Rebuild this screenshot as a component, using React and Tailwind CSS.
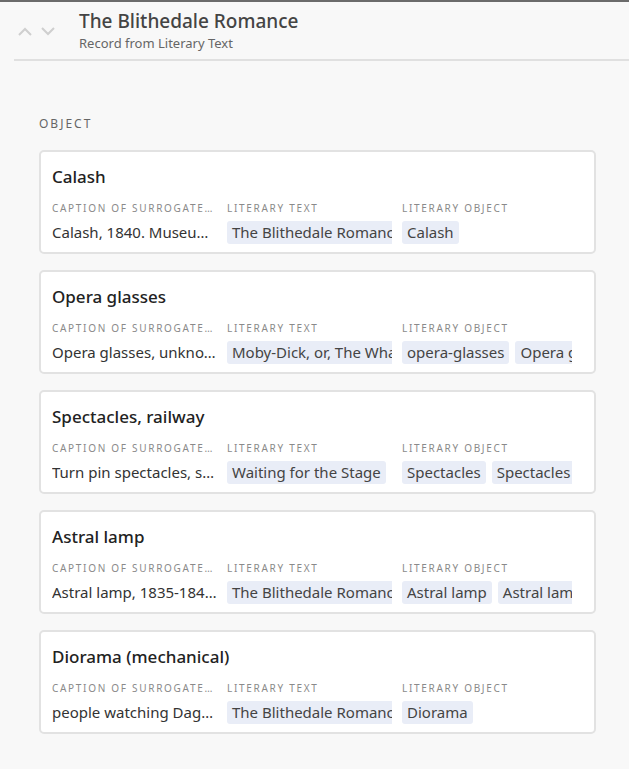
import React from 'react';

const records = [
  {
    title: 'Calash',
    caption: 'Calash, 1840. Museum of Fine Arts, Boston',
    texts: ['The Blithedale Romance'],
    objects: ['Calash'],
  },
  {
    title: 'Opera glasses',
    caption: 'Opera glasses, unknown maker, c. 1850',
    texts: ['Moby-Dick, or, The Whale'],
    objects: ['opera-glasses', 'Opera glasses'],
  },
  {
    title: 'Spectacles, railway',
    caption: 'Turn pin spectacles, steel frame',
    texts: ['Waiting for the Stage'],
    objects: ['Spectacles', 'Spectacles'],
  },
  {
    title: 'Astral lamp',
    caption: 'Astral lamp, 1835-1840, brass',
    texts: ['The Blithedale Romance'],
    objects: ['Astral lamp', 'Astral lamp'],
  },
  {
    title: 'Diorama (mechanical)',
    caption: 'people watching Daguerre diorama',
    texts: ['The Blithedale Romance'],
    objects: ['Diorama'],
  },
];

const Chip = ({ children }) => (
  <span className="shrink-0 bg-[#e9edf7] rounded-[3px] px-[5px] h-[23px] leading-[23px] whitespace-nowrap">
    {children}
  </span>
);

const Label = ({ children }) => (
  <div className="text-[10px] tracking-[1.7px] uppercase text-[#8a8a8a] truncate leading-[14px]">
    {children}
  </div>
);

const Card = ({ rec }) => (
  <div className="bg-white border-2 border-[#e2e2e2] rounded-[5px] px-[11px] pt-[12px] pb-[8px]">
    <div className="text-[17px] text-[#222] font-medium leading-[26px]">{rec.title}</div>
    <div className="grid grid-cols-[165px_165px_170px] gap-x-[10px] mt-[11px]">
      <div className="min-w-0">
        <Label>Caption of surrogate-image</Label>
        <div className="truncate text-[15px] text-[#333] leading-[23px] mt-[6px]">{rec.caption}</div>
      </div>
      <div className="min-w-0">
        <Label>Literary Text</Label>
        <div className="flex gap-[6px] overflow-hidden text-[15px] text-[#444] mt-[6px]">
          {rec.texts.map((t, i) => <Chip key={i}>{t}</Chip>)}
        </div>
      </div>
      <div className="min-w-0">
        <Label>Literary Object</Label>
        <div className="flex gap-[6px] overflow-hidden text-[15px] text-[#444] mt-[6px]">
          {rec.objects.map((t, i) => <Chip key={i}>{t}</Chip>)}
        </div>
      </div>
    </div>
  </div>
);

export default function App() {
  return (
    <div className="min-h-[769px] bg-[#f8f8f8] border-t-2 border-[#6b6b6b] font-['Noto_Sans',sans-serif]">
      <div className="ml-[14px] border-b-2 border-[#e0e0e0] flex items-start h-[59px]">
        <div className="flex items-center gap-[9px] pl-[4px] pt-[25px] text-[#cfcfcf]">
          <svg width="14" height="9" viewBox="0 0 14 9" fill="none" stroke="currentColor" strokeWidth="2">
            <path d="M1 8l6-6 6 6" />
          </svg>
          <svg width="14" height="9" viewBox="0 0 14 9" fill="none" stroke="currentColor" strokeWidth="2">
            <path d="M1 1l6 6 6-6" />
          </svg>
        </div>
        <div className="ml-[24px] pt-[6px]">
          <div className="text-[19px] text-[#444] leading-[26px] font-medium">The Blithedale Romance</div>
          <div className="text-[13px] text-[#666] leading-[17px] mt-[1px]">Record from Literary Text</div>
        </div>
      </div>
      <div className="px-[39px] pt-[55px] pb-[30px]">
        <div className="text-[12px] tracking-[2px] text-[#666] leading-[16px]">OBJECT</div>
        <div className="flex flex-col gap-[16px] mt-[18px] w-[557px]">
          {records.map((r, i) => <Card key={i} rec={r} />)}
        </div>
      </div>
    </div>
  );
}
